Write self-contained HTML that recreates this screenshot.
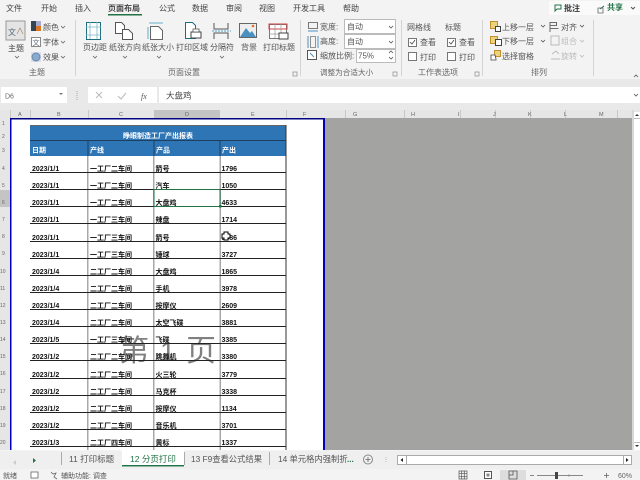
<!DOCTYPE html>
<html lang="zh"><head><meta charset="utf-8"><title>Excel</title>
<style>
html,body{margin:0;padding:0;background:#f3f3f3}
svg{display:block}
text{font-family:"Liberation Sans","Noto Sans CJK SC",sans-serif}
.t{font-size:8px;fill:#444}
.r{font-size:8px;fill:#555}
.d{font-size:8px;fill:#bbb}
.h{font-size:5.5px;fill:#666}
.n{font-size:5px;fill:#666}
.c{font-size:7px;font-weight:bold;fill:#111}
.w{font-size:7px;font-weight:bold;fill:#fff}
.g{font-size:8px;fill:#666}
</style></head><body>
<svg width="640" height="480" viewBox="0 0 640 480" xmlns="http://www.w3.org/2000/svg">
<rect width="640" height="480" fill="#f3f3f3"/>
<!-- tabs -->
<text x="6" y="11" class="t">文件</text><text x="41" y="11" class="t">开始</text><text x="75" y="11" class="t">插入</text>
<text x="108" y="11" class="t" style="font-weight:bold">页面布局</text><text x="159" y="11" class="t">公式</text><text x="192" y="11" class="t">数据</text>
<text x="226" y="11" class="t">审阅</text><text x="259" y="11" class="t">视图</text><text x="293" y="11" class="t">开发工具</text><text x="343" y="11" class="t">帮助</text>
<rect x="108" y="14" width="34" height="1.500" fill="#217346"/>
<!-- comment/share -->
<rect x="549" y="1" width="47" height="14" fill="#fafafa"/><rect x="592" y="1" width="48" height="14" fill="#fafafa"/>
<path d="M555 5h6v4h-4l-2 2z" fill="none" stroke="#217346"/>
<text x="564" y="11" style="font-size:8px;font-weight:bold;fill:#333">批注</text>
<path d="M598 8h5v5h-5z" fill="none" stroke="#666" stroke-width=".8"/><path d="M600 9l4-3" stroke="#217346"/>
<text x="607" y="10" style="font-size:8px;font-weight:bold;fill:#217346">共享</text>
<path d="M631 7l2 2 2-2" fill="none" stroke="#555"/>
<!-- ribbon separators -->
<g fill="#d4d4d4"><rect x="75" y="20" width="1" height="56"/><rect x="300" y="20" width="1" height="56"/><rect x="401" y="20" width="1" height="56"/><rect x="482" y="20" width="1" height="56"/><rect x="593" y="20" width="1" height="56"/></g>
<!-- theme group -->
<rect x="6" y="21" width="19" height="19" fill="#e4e4e4" stroke="#999"/>
<text x="8" y="35" style="font-size:8px;fill:#567">文</text><path d="M17 34l3-6 3 6" stroke="#a86" fill="none" stroke-width=".7"/>
<text x="8" y="51" class="t">主题</text><path d="M15 56l2 2 2-2" fill="none" stroke="#666" stroke-width=".8"/>
<rect x="31" y="21" width="5" height="10" fill="#345"/><rect x="36" y="21" width="5" height="5" fill="#aac"/><rect x="36" y="26" width="5" height="5" fill="#d72"/>
<text x="43" y="30" class="r">颜色</text><path d="M61 26l2 2 2-2" fill="none" stroke="#666" stroke-width=".8"/>
<rect x="31.500" y="37.500" width="9" height="9" fill="#fff" stroke="#888"/><text x="32.500" y="45" style="font-size:7px;fill:#567">文</text>
<text x="43" y="45" class="r">字体</text><path d="M61 41l2 2 2-2" fill="none" stroke="#666" stroke-width=".8"/>
<rect x="31" y="52" width="10" height="10" fill="#dde"/><circle cx="36" cy="57" r="4" fill="#8ac" stroke="#68a"/>
<text x="43" y="60" class="r">效果</text><path d="M61 56l2 2 2-2" fill="none" stroke="#666" stroke-width=".8"/>
<text x="29" y="75" class="g">主题</text>
<!-- page setup group -->
<rect x="86.500" y="22.500" width="14" height="17" fill="#fff" stroke="#1c6d80"/><path d="M86 27h15M86 35h15M90 22v17M97 22v17" stroke="#7ab5c8" stroke-width=".8"/>
<text x="83" y="50" class="r">页边距</text><path d="M93 56l2 2 2-2" fill="none" stroke="#666" stroke-width=".8"/>
<path d="M115.500 22.500h6l3 3v8h-9z" fill="#fff" stroke="#555"/><path d="M122.500 29.500h6l4 4v6h-10z" fill="#fff" stroke="#555"/>
<text x="109" y="50" class="r">纸张方向</text><path d="M123 56l2 2 2-2" fill="none" stroke="#666" stroke-width=".8"/>
<path d="M150.500 26.500h8l4 4v9h-12z" fill="#fff" stroke="#666"/><path d="M149 23h14M148 27v12" stroke="#3f9ac0" stroke-width=".8"/>
<text x="142" y="50" class="r">纸张大小</text><path d="M157 56l2 2 2-2" fill="none" stroke="#666" stroke-width=".8"/>
<path d="M185.500 22.500h7l3 3v13h-10z" fill="#fff" stroke="#1c6d80"/><rect x="191" y="32" width="10" height="6" fill="#fff" stroke="#444"/><rect x="193" y="29" width="6" height="3" fill="#fff" stroke="#444" stroke-width=".7"/>
<text x="176" y="50" class="r">打印区域</text>
<path d="M214 23v6h14v-6M214 39v-6h14v6" fill="none" stroke="#555"/><path d="M212 31h19" stroke="#4fa0c8" stroke-dasharray="2 1"/>
<text x="210" y="50" class="r">分隔符</text><path d="M220 56l2 2 2-2" fill="none" stroke="#666" stroke-width=".8"/>
<rect x="239.500" y="23.500" width="17" height="14" fill="#eee" stroke="#666"/><path d="M240 37l6-9 4 5 2-2 4 6z" fill="#4a90c0"/><circle cx="253" cy="26" r="1.300" fill="#e07030"/>
<text x="241" y="50" class="r">背景</text>
<rect x="269.500" y="24.500" width="17" height="14" fill="#fff" stroke="#777"/><rect x="269" y="24" width="18" height="5" fill="none" stroke="#c44"/><path d="M269 34h18M275 24v14M281 24v14" stroke="#999" stroke-width=".7"/><rect x="279" y="33" width="9" height="6" fill="#fff" stroke="#444"/>
<text x="263" y="50" class="r">打印标题</text>
<text x="168" y="75" class="g">页面设置</text>
<rect x="293" y="72" width="4" height="4" fill="none" stroke="#888" stroke-width=".7"/>
<!-- scale group -->
<path d="M308.500 22.500h9v6h-9z" fill="none" stroke="#555" stroke-width=".8"/><path d="M308 31h10" stroke="#3f86c0" stroke-width=".9"/>
<path d="M310.500 36.500h5v11h-5z" fill="none" stroke="#777" stroke-width=".8"/><path d="M308 36v12M318 36v12" fill="none" stroke="#3f86c0" stroke-width=".9"/>
<rect x="307.500" y="50.500" width="9" height="9" fill="#fff" stroke="#555"/><path d="M310 53l4 4" stroke="#4a90c0"/>
<text x="320" y="29.500" class="r">宽度:</text><text x="320" y="44" class="r">高度:</text><text x="320" y="58.500" class="r">缩放比例:</text>
<rect x="344.500" y="19.500" width="51" height="14" fill="#fff" stroke="#bbb"/><text x="347" y="29.500" class="r">自动</text><path d="M389 26l2 2 2-2" fill="none" stroke="#555" stroke-width=".8"/>
<rect x="344.500" y="34.500" width="51" height="14" fill="#fff" stroke="#bbb"/><text x="347" y="44.500" class="r">自动</text><path d="M389 41l2 2 2-2" fill="none" stroke="#555" stroke-width=".8"/>
<rect x="356.500" y="49.500" width="39" height="13" fill="#fff" stroke="#bbb"/><text x="358" y="58.500" class="r">75%</text><path d="M389 53l2-2 2 2M389 57l2 2 2-2" fill="none" stroke="#555" stroke-width=".8"/>
<text x="320" y="75" style="font-size:7.600px;fill:#666">调整为合适大小</text>
<rect x="393" y="72" width="4" height="4" fill="none" stroke="#888" stroke-width=".7"/>
<!-- sheet options -->
<text x="407" y="30" class="r">网格线</text><text x="445" y="30" class="r">标题</text>
<rect x="408.500" y="38.500" width="8" height="8" fill="#fff" stroke="#777"/><path d="M410 42l2 2 3-4" fill="none" stroke="#444" stroke-width=".8"/><text x="420" y="45" class="r">查看</text>
<rect x="408.500" y="52.500" width="8" height="8" fill="#fff" stroke="#777"/><text x="420" y="60" class="r">打印</text>
<rect x="447.500" y="38.500" width="8" height="8" fill="#fff" stroke="#777"/><path d="M449 42l2 2 3-4" fill="none" stroke="#444" stroke-width=".8"/><text x="459" y="45" class="r">查看</text>
<rect x="447.500" y="52.500" width="8" height="8" fill="#fff" stroke="#777"/><text x="459" y="60" class="r">打印</text>
<text x="418" y="75" class="g">工作表选项</text>
<rect x="475" y="72" width="4" height="4" fill="none" stroke="#888" stroke-width=".7"/>
<!-- arrange -->
<rect x="490.500" y="21.500" width="7" height="7" fill="#ecd27a" stroke="#c09030"/><rect x="495.500" y="26.500" width="5" height="5" fill="#fff" stroke="#444"/><text x="502" y="30" class="r">上移一层</text><path d="M541 25l2 2 2-2" fill="none" stroke="#555" stroke-width=".8"/>
<rect x="490.500" y="36.500" width="7" height="7" fill="#ecd27a" stroke="#c09030"/><rect x="495.500" y="39.500" width="6" height="6" fill="#fff" stroke="#444"/><text x="502" y="44" class="r">下移一层</text><path d="M541 40l2 2 2-2" fill="none" stroke="#555" stroke-width=".8"/>
<rect x="494.500" y="50.500" width="6" height="6" fill="#ecd27a" stroke="#c09030"/><path d="M491 55h4l1 4v1h-5z" fill="#fff" stroke="#444" stroke-width=".8"/><text x="502" y="59" class="r">选择窗格</text>
<path d="M550 22v10M550.500 22.500h6v3h-6M550.500 28.500h8" fill="none" stroke="#444" stroke-width=".8"/><text x="561" y="30" class="r">对齐</text><path d="M580 25l2 2 2-2" fill="none" stroke="#555" stroke-width=".8"/>
<rect x="551" y="36" width="8" height="9" fill="none" stroke="#bbb"/><text x="561" y="44" class="d">组合</text><path d="M580 40l2 2 2-2" fill="none" stroke="#bbb" stroke-width=".8"/>
<path d="M551 59h9M552 54l4-3 3 3" fill="none" stroke="#bbb"/><text x="561" y="59" class="d">旋转</text><path d="M580 55l2 2 2-2" fill="none" stroke="#bbb" stroke-width=".8"/>
<text x="531" y="75" class="g">排列</text>
<path d="M634 77l2-2 2 2" fill="none" stroke="#555" stroke-width=".8"/>
<!-- formula bar -->
<rect y="79" width="640" height="31" fill="#e9e9e9"/>
<rect x="1" y="87" width="66" height="16" fill="#fff"/><text x="5" y="98.500" style="font-size:7px;fill:#666">D6</text><path d="M59 93l2 2 2-2" fill="#777"/>
<path d="M77 91v9" stroke="#aaa" stroke-dasharray="1 1"/>
<rect x="88" y="87" width="69" height="16" fill="#fff"/><path d="M96 92l6 6M102 92l-6 6" stroke="#bbb"/><path d="M118 96l3 3 5-6" fill="none" stroke="#bbb"/>
<text x="141" y="99" style="font-size:8px;font-style:italic;font-family:'Liberation Serif',serif;fill:#555">fx</text>
<rect x="159" y="87" width="481" height="16" fill="#fff"/><text x="166" y="98.500" style="font-size:8.500px;fill:#444">大盘鸡</text>
<path d="M634 94l2 2 2-2" fill="none" stroke="#555" stroke-width=".8"/>
<!-- column headers -->
<rect y="110" width="640" height="8" fill="#e6e6e6"/>
<rect x="154" y="110" width="66" height="8" fill="#c4c4c4"/>
<g fill="#c8c8c8"><rect x="10" y="110" width="1" height="8"/><rect x="30" y="110" width="1" height="8"/><rect x="88" y="110" width="1" height="8"/><rect x="286" y="110" width="1" height="8"/><rect x="345" y="110" width="1" height="8"/><rect x="404" y="110" width="1" height="8"/><rect x="460" y="110" width="1" height="8"/><rect x="495" y="110" width="1" height="8"/><rect x="530" y="110" width="1" height="8"/><rect x="565" y="110" width="1" height="8"/><rect x="617" y="110" width="1" height="8"/></g>
<text x="18" y="116" class="h">A</text><text x="57" y="116" class="h">B</text><text x="119" y="116" class="h">C</text><text x="185" y="116" class="h">D</text><text x="251" y="116" class="h">E</text><text x="303" y="116" class="h">F</text><text x="353" y="116" class="h">G</text><text x="411" y="116" class="h">H</text><text x="458" y="116" class="h">I</text><text x="493" y="116" class="h">J</text><text x="528" y="116" class="h">K</text><text x="564" y="116" class="h">L</text><text x="599" y="116" class="h">M</text>
<!-- row headers -->
<rect y="118" width="10" height="332" fill="#e6e6e6"/>
<rect y="190" width="10" height="17" fill="#c4c4c4"/>
<text x="2" y="125" class="n">1</text><text x="2" y="138" class="n">2</text><text x="2" y="152" class="n">3</text><text x="2" y="170" class="n">4</text><text x="2" y="187" class="n">5</text><text x="2" y="204" class="n">6</text><text x="2" y="221" class="n">7</text><text x="2" y="238" class="n">8</text><text x="2" y="255" class="n">9</text><text x="0" y="273" class="n">10</text><text x="0" y="290" class="n">11</text><text x="0" y="307" class="n">12</text><text x="0" y="324" class="n">13</text><text x="0" y="341" class="n">14</text><text x="0" y="358" class="n">15</text><text x="0" y="375" class="n">16</text><text x="0" y="393" class="n">17</text><text x="0" y="410" class="n">18</text><text x="0" y="427" class="n">19</text><text x="0" y="444" class="n">20</text>
<!-- gray non-page area and page -->
<rect x="325" y="118" width="307" height="332" fill="#a3a3a1"/>
<rect x="10" y="118" width="315" height="332" fill="#fff"/>
<!-- watermark -->
<text x="119" y="361" style="font-size:30px;fill:#808080">第</text>
<text x="160" y="361" style="font-size:28px;fill:#808080">1</text>
<text x="186" y="361" style="font-size:30px;fill:#808080">页</text>
<rect x="10" y="118" width="1.500" height="332" fill="#0000c0"/>
<rect x="323" y="118" width="2" height="332" fill="#0000c0"/>
<rect x="10" y="118" width="315" height="1.500" fill="#000080"/>
<!-- table header -->
<rect x="30" y="126" width="256" height="30" fill="#2e75b6"/>
<rect x="30" y="125" width="256" height="1" fill="#666"/>
<rect x="30" y="140" width="256" height="1" fill="#1f3f60"/>
<g fill="#1f3f60"><rect x="87.500" y="141" width="1" height="15"/><rect x="153.500" y="141" width="1" height="15"/><rect x="219.500" y="141" width="1" height="15"/></g>
<text x="123" y="138" class="w">睁眼制造工厂产出报表</text>
<text x="32" y="152.500" class="w">日期</text><text x="90" y="152.500" class="w">产线</text><text x="156" y="152.500" class="w">产品</text><text x="222" y="152.500" class="w">产出</text>
<!-- grid -->
<g fill="#a8a8a8"><rect x="87" y="156" width="1.500" height="294"/><rect x="153" y="156" width="1.500" height="294"/><rect x="219.500" y="156" width="1.500" height="294"/></g>
<rect x="285.500" y="125" width="1" height="325" fill="#333"/>
<g fill="#222">
<rect x="30" y="172" width="256" height="1"/><rect x="30" y="189" width="256" height="1"/><rect x="30" y="206" width="256" height="1"/><rect x="30" y="223" width="256" height="1"/><rect x="30" y="241" width="256" height="1"/><rect x="30" y="258" width="256" height="1"/><rect x="30" y="275" width="256" height="1"/><rect x="30" y="292" width="256" height="1"/><rect x="30" y="309" width="256" height="1"/><rect x="30" y="326" width="256" height="1"/><rect x="30" y="343" width="256" height="1"/><rect x="30" y="360" width="256" height="1"/><rect x="30" y="378" width="256" height="1"/><rect x="30" y="395" width="256" height="1"/><rect x="30" y="412" width="256" height="1"/><rect x="30" y="429" width="256" height="1"/><rect x="30" y="446" width="256" height="1"/>
</g>
<!-- cells -->
<text x="32" y="171" class="c">2023/1/1</text><text x="90" y="171" class="c">一工厂二车间</text><text x="155.500" y="171" class="c">箭号</text><text x="221.500" y="171" class="c">1796</text>
<text x="32" y="188" class="c">2023/1/1</text><text x="90" y="188" class="c">一工厂二车间</text><text x="155.500" y="188" class="c">汽车</text><text x="221.500" y="188" class="c">1050</text>
<text x="32" y="205" class="c">2023/1/1</text><text x="90" y="205" class="c">一工厂二车间</text><text x="155.500" y="205" class="c">大盘鸡</text><text x="221.500" y="205" class="c">4633</text>
<text x="32" y="222" class="c">2023/1/1</text><text x="90" y="222" class="c">一工厂三车间</text><text x="155.500" y="222" class="c">辣盘</text><text x="221.500" y="222" class="c">1714</text>
<text x="32" y="240" class="c">2023/1/1</text><text x="90" y="240" class="c">一工厂三车间</text><text x="155.500" y="240" class="c">箭号</text><text x="221.500" y="240" class="c">3686</text>
<text x="32" y="257" class="c">2023/1/1</text><text x="90" y="257" class="c">一工厂三车间</text><text x="155.500" y="257" class="c">锤球</text><text x="221.500" y="257" class="c">3727</text>
<text x="32" y="274" class="c">2023/1/4</text><text x="90" y="274" class="c">二工厂二车间</text><text x="155.500" y="274" class="c">大盘鸡</text><text x="221.500" y="274" class="c">1865</text>
<text x="32" y="291" class="c">2023/1/4</text><text x="90" y="291" class="c">二工厂二车间</text><text x="155.500" y="291" class="c">手机</text><text x="221.500" y="291" class="c">3978</text>
<text x="32" y="308" class="c">2023/1/4</text><text x="90" y="308" class="c">二工厂二车间</text><text x="155.500" y="308" class="c">按摩仪</text><text x="221.500" y="308" class="c">2609</text>
<text x="32" y="325" class="c">2023/1/4</text><text x="90" y="325" class="c">二工厂二车间</text><text x="155.500" y="325" class="c">太空飞碟</text><text x="221.500" y="325" class="c">3881</text>
<text x="32" y="342" class="c">2023/1/5</text><text x="90" y="342" class="c">一工厂三车间</text><text x="155.500" y="342" class="c">飞碟</text><text x="221.500" y="342" class="c">3385</text>
<text x="32" y="359" class="c">2023/1/2</text><text x="90" y="359" class="c">二工厂二车间</text><text x="155.500" y="359" class="c">跳舞机</text><text x="221.500" y="359" class="c">3380</text>
<text x="32" y="377" class="c">2023/1/2</text><text x="90" y="377" class="c">二工厂二车间</text><text x="155.500" y="377" class="c">火三轮</text><text x="221.500" y="377" class="c">3779</text>
<text x="32" y="394" class="c">2023/1/2</text><text x="90" y="394" class="c">二工厂二车间</text><text x="155.500" y="394" class="c">马克杯</text><text x="221.500" y="394" class="c">3338</text>
<text x="32" y="411" class="c">2023/1/2</text><text x="90" y="411" class="c">二工厂二车间</text><text x="155.500" y="411" class="c">按摩仪</text><text x="221.500" y="411" class="c">1134</text>
<text x="32" y="428" class="c">2023/1/2</text><text x="90" y="428" class="c">二工厂二车间</text><text x="155.500" y="428" class="c">音乐机</text><text x="221.500" y="428" class="c">3701</text>
<text x="32" y="445" class="c">2023/1/3</text><text x="90" y="445" class="c">二工厂四车间</text><text x="155.500" y="445" class="c">黄标</text><text x="221.500" y="445" class="c">1337</text>
<!-- selection -->
<rect x="154" y="189.500" width="66" height="17" fill="none" stroke="#217346" stroke-width="1"/>
<rect x="219" y="205" width="2.500" height="2.500" fill="#217346"/>
<!-- cursor -->
<path d="M224 232h4v2h2v4h-2v2h-4v-2h-2v-4h2z" fill="#fff" stroke="#000" stroke-width="1"/>
<!-- right scrollbar -->
<rect x="632" y="110" width="2" height="340" fill="#d8d8d8"/>
<rect x="634" y="112" width="6" height="338" fill="#fff"/>
<path d="M635 116l2-2 2 2z" fill="#333"/><rect x="634" y="118" width="6" height="1" fill="#bbb"/>
<path d="M635 445l2 2 2-2z" fill="#333"/><rect x="634" y="442" width="6" height="1" fill="#bbb"/>
<!-- sheet tabs -->
<rect y="451" width="640" height="18" fill="#efefef"/>
<path d="M16 460l-3 2.500 3 2.500z" fill="#ccc"/><path d="M33 458l3 2.500-3 2.500z" fill="#217346"/>
<rect x="61" y="452" width="1" height="13" fill="#aaa"/>
<rect x="122" y="450" width="62" height="17" fill="#fff"/><rect x="122" y="465" width="62" height="1.500" fill="#217346"/>
<rect x="184" y="452" width="1" height="13" fill="#aaa"/><rect x="269" y="452" width="1" height="13" fill="#aaa"/>
<text x="69" y="462" style="font-size:8.500px;fill:#555">11 打印标题</text>
<text x="130" y="462" style="font-size:8.500px;fill:#217346">12 分页打印</text>
<text x="191" y="462" style="font-size:8.300px;fill:#555">13 F9查看公式结果</text>
<text x="278" y="462" style="font-size:8.300px;fill:#555">14 单元格内强制折</text>
<text x="347" y="462" style="font-size:8px;fill:#217346;font-weight:bold">...</text>
<circle cx="368" cy="459.500" r="4.500" fill="none" stroke="#888"/><path d="M365.500 459.500h5M368 457v5" stroke="#666" stroke-width=".8"/>
<path d="M386 457v6" stroke="#bbb" stroke-dasharray="1 1"/>
<rect x="397.500" y="455.500" width="232" height="9" fill="#fff" stroke="#aaa"/>
<rect x="397.500" y="455.500" width="9" height="9" fill="#fff" stroke="#aaa"/><path d="M403 458v4l-2.500-2z" fill="#222"/>
<rect x="623.500" y="455.500" width="8" height="9" fill="#fff" stroke="#aaa"/><path d="M626 458v4l2.500-2z" fill="#222"/>
<!-- status bar -->
<rect y="469" width="640" height="11" fill="#f3f3f3"/>
<text x="3" y="478" style="font-size:7px;fill:#555">就绪</text>
<rect x="31" y="472" width="7" height="6" fill="#fff" stroke="#666" stroke-width=".8"/>
<path d="M51 472l2 2 3-1-2 4 3 2" fill="none" stroke="#666" stroke-width=".8"/>
<text x="61" y="478" style="font-size:7px;fill:#555">辅助功能: 调查</text>
<rect x="500" y="470" width="26" height="10" fill="#ddd"/>
<path d="M459 471h8v8h-8zM459 473.700h8M459 476.300h8M461.700 471v8M464.300 471v8" fill="none" stroke="#555" stroke-width=".7"/>
<rect x="484.500" y="471.500" width="7" height="7" fill="#fff" stroke="#555"/><rect x="486.500" y="473.500" width="3" height="3" fill="#888"/>
<path d="M509 471h8v8h-8zM513 471v4h-4" fill="none" stroke="#555" stroke-width=".8"/>
<path d="M530 475.500h4M537 475.500h46" stroke="#666" stroke-width=".7"/>
<rect x="555" y="472" width="3" height="7" fill="#444"/>
<path d="M569 474v3" stroke="#888" stroke-width=".6"/>
<path d="M604 475.500h5M606.500 473v5" stroke="#666" stroke-width=".8"/>
<text x="618" y="478" style="font-size:7px;fill:#666">60%</text>
</svg>
</body></html>
